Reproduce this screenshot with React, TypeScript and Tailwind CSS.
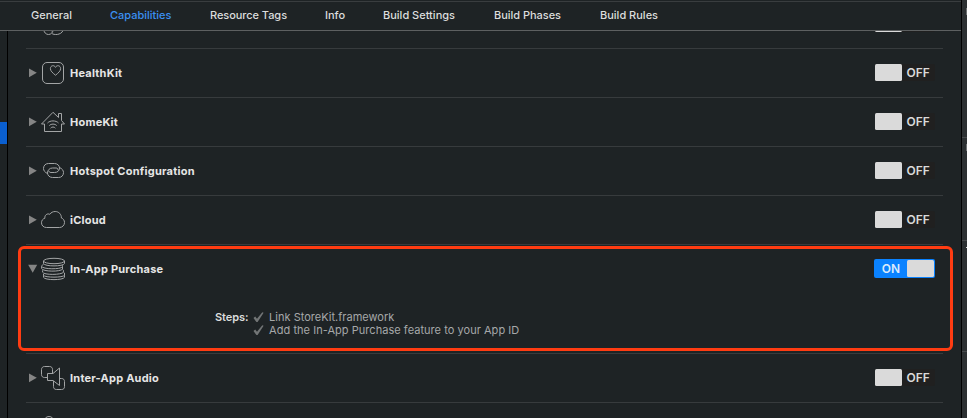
import React from "react";

const tabs = [
  { label: "General", cls: "w-[79px]" },
  { label: "Capabilities", cls: "w-[100px] text-[#3b8ff2]" },
  { label: "Resource Tags", cls: "w-[115px] tracking-[-0.06px]" },
  { label: "Info", cls: "w-[58px]" },
  { label: "Build Settings", cls: "w-[111px]" },
  { label: "Build Phases", cls: "w-[106px] tracking-[-0.03px]" },
  { label: "Build Rules", cls: "w-[80px]" },
];

function Icon({ children }: { children?: React.ReactNode }) {
  return (
    <svg width="26" height="26" viewBox="0 0 26 26" fill="none" stroke="#a3a5a6" strokeWidth="1" strokeLinejoin="round" className="mr-[4px] ml-[2px] shrink-0">
      {children}
    </svg>
  );
}

const GameIcon = (
  <Icon>
    <circle cx="8.5" cy="19" r="4.5" />
    <path d="M6 20C8 17 11 18 12 20.5" />
    <path d="M12 22.5C13.5 24 21 24.5 23 19.5" />
  </Icon>
);

const HealthIcon = (
  <Icon>
    <rect x="2.5" y="2.5" width="21" height="21" rx="4.5" />
    <path d="M15.5 15.2C12.5 12.8 10.4 11 10.4 8.6C10.4 5.4 14.3 4.6 15.5 7.4C16.7 4.6 20.6 5.4 20.6 8.6C20.6 11 18.5 12.8 15.5 15.2Z" />
  </Icon>
);

const HomeIcon = (
  <Icon>
    <path d="M4.5 15V22.5H21.5V15H24.5L21.5 11.5V4.5H18.5V8.5L13 3.3L1.5 15Z" strokeLinejoin="miter" />
    <path d="M7.5 14C10 11.2 16 11.2 18.5 14M9.3 16.6C11 14.6 15 14.6 16.7 16.6M10.6 19.2C11.8 17.6 14.2 17.6 15.4 19.2" />
  </Icon>
);

const HotspotIcon = (
  <Icon>
    <path d="M7.5 15.5C5 14.5 3.5 12.5 3.5 10.5C3.5 7.5 5.5 5.5 8.5 5.5H14.5C17.5 5.5 19.5 7.7 19.5 10C19.5 12.8 17.5 14.5 14.5 14.5H11C9.5 14.5 9 13.8 9 13" />
    <path d="M19.5 9.5C22 10.5 23.5 12.5 23.5 14.5C23.5 17.5 21.5 19.5 18.5 19.5H12.5C9.5 19.5 7.5 17.3 7.5 15C7.5 12.2 9.5 10 12.5 10H16C17.5 10 18 10.7 18 12" />
  </Icon>
);

const CloudIcon = (
  <Icon>
    <path d="M6.5 20.5C3.5 20.5 1.5 18.5 1.5 15.8C1.5 13.5 2.8 11.8 4.9 11.2C4.4 8.2 7.2 6 9.8 7.3C11 5.5 13 4.5 15.2 4.5C18.8 4.5 21.5 7.3 21.4 11C23.2 11.6 24.5 13.3 24.5 15.5C24.5 18.3 22.3 20.5 19.5 20.5Z" />
  </Icon>
);

const CoinsIcon = (
  <Icon>
    <ellipse cx="14" cy="5" rx="10.5" ry="2.7" />
    <path d="M3.5 5V7.5C4.5 10.7 23.5 10.7 24.5 7.5V5" />
    <path d="M3.5 8.5C2.2 9 1.6 9.7 1.6 10.3C2.5 13.4 21 13.6 22.5 10.7V9.3M1.6 10.3V12.5C2.5 15.8 21 16 22.5 13V10.7" />
    <path d="M2.6 14.3V16.2C3.5 19.2 22 19 23.4 16.2V14.2L22.5 13.5M3.5 18V19.2C4.5 21.8 23.5 21.8 24.5 19.2V17L23.4 16.2M3.5 19.2V21.3C4.5 24.4 23.5 24.4 24.5 21.3V19.2" />
  </Icon>
);

const AudioIcon = (
  <Icon>
    <path d="M7.5 12.5H4.5C2.8 12.5 1.5 11.5 1.5 9.5V4.5C1.5 2.8 2.8 1.5 4.5 1.5H9.5C11.5 1.5 12.5 2.8 12.5 4.5V8.5" />
    <path d="M7.5 8.5H13L19.5 3V20.5L13 15.5H7.5Z" strokeLinejoin="miter" />
    <path d="M19.5 13.5H21.5C23.5 13.5 24.5 14.8 24.5 16.5V21.5C24.5 23.5 23.5 24.5 21.5 24.5H16.5C14.5 24.5 13.5 23.5 13.5 21.5V16" />
  </Icon>
);

const KeyIcon = (
  <Icon>
    <circle cx="9" cy="6.5" r="5" />
  </Icon>
);

function Disclosure({ open }: { open?: boolean }) {
  return (
    <svg width="10" height="10" viewBox="0 0 10 10" fill="#858585" className="ml-[2px] shrink-0">
      {open ? <path d="M0.2 0.8H9.2L4.7 8.8Z" /> : <path d="M1 0.4L8.8 4.8L1 9.2Z" />}
    </svg>
  );
}

function Toggle({ on, label = true }: { on?: boolean; label?: boolean }) {
  if (on) {
    return (
      <div className="mr-[8px] flex h-[19px] w-[61px] -translate-y-px items-center justify-end rounded-[2px] bg-[#0a82ff] pr-px">
        <span className="w-[32px] pt-px text-center text-[12px] font-semibold text-[#dcebfb]">ON</span>
        <span className="h-[17px] w-[27px] rounded-[1.5px] bg-[#dadada]" />
      </div>
    );
  }
  return (
    <div className="mr-[8px] flex h-[17px] w-[60px] -translate-y-px items-center rounded-[2px] bg-[#202020]">
      <span className="h-[17px] w-[27px] rounded-[1.5px] bg-[#dadada]" />
      {label && <span className="pt-px pl-[4.5px] text-[12px] font-semibold text-[#dadada]">OFF</span>}
    </div>
  );
}

function Row({ icon, name, nameClass = "", on, children }: { icon: React.ReactNode; name: string; nameClass?: string; on?: boolean; children?: React.ReactNode }) {
  return (
    <section className="shrink-0 border-b border-[#373b3d]">
      <div className="flex h-12 items-center">
        <Disclosure open={on} />
        {icon}
        <h3 className={`grow text-[11px] leading-4 font-bold text-[#e6e6e6] ${nameClass}`}>{name}</h3>
        <Toggle on={on} />
      </div>
      {children}
    </section>
  );
}

function Step({ text, cls }: { text: string; cls: string }) {
  return (
    <li className="flex h-[13px] items-center">
      <svg width="11" height="11" viewBox="0 0 11 11" className="mr-[5px] -ml-[1.5px]" fill="#727576">
        <path d="M0.5 6L2.2 4.6L4 6.8L9.3 0.2L10.6 0.7L4.6 10H3.4Z" />
      </svg>
      <span className={`text-[11px] text-[#a6a8a9] ${cls}`}>{text}</span>
    </li>
  );
}

export default function App() {
  return (
    <div className="flex h-[418px] w-[967px] overflow-hidden bg-[#1e2325] font-['Inter',sans-serif] whitespace-nowrap">
      <div className="relative flex w-[961px] shrink-0 flex-col">
        <nav className="flex h-[31px] shrink-0 items-center border-b border-[#5d6061] pl-[31px] text-[11px] font-medium text-[#dcdddd] shadow-[inset_0_1px_0_#1e2325,inset_0_2px_0_#393d3f]">
          {tabs.map((t) => (
            <a key={t.label} className={t.cls}>{t.label}</a>
          ))}
        </nav>
        <div className="flex h-[387px]">
          <aside className="w-[8px] shrink-0 border-r border-black pt-[91px]">
            <div className="h-[22px] bg-[#0a5fd0]" />
          </aside>
          <main className="flex h-[387px] grow flex-col overflow-hidden pr-[18px] pl-[18px]">
            <div className="-mt-[31px] flex flex-col">
              <div className="flex h-[49px] items-center border-b border-[#373b3d] pl-[12px]">
                {GameIcon}
                <div className="grow" />
                <Toggle label={false} />
              </div>
              <Row icon={HealthIcon} name="HealthKit" nameClass="tracking-[0.23px]" />
              <Row icon={HomeIcon} name="HomeKit" nameClass="tracking-[0.21px]" />
              <Row icon={HotspotIcon} name="Hotspot Configuration" nameClass="tracking-[0.24px]" />
              <Row icon={CloudIcon} name="iCloud" nameClass="tracking-[0.2px]" />
              <Row icon={CoinsIcon} name="In-App Purchase" nameClass="tracking-[0.22px]" on>
                <div className="flex h-[60px] pt-[18px] pl-[189px]">
                  <span className="mr-[6px] h-[13px] text-[11px] leading-[13px] font-semibold tracking-[-0.05px] text-[#dcdddd]">Steps:</span>
                  <ul>
                    <Step text="Link StoreKit.framework" cls="tracking-[0.01px]" />
                    <Step text="Add the In-App Purchase feature to your App ID" cls="tracking-[0.04px]" />
                  </ul>
                </div>
              </Row>
              <Row icon={AudioIcon} name="Inter-App Audio" nameClass="tracking-[0.22px]" />
              <div className="flex h-[49px] items-center pl-[12px]">{KeyIcon}</div>
            </div>
          </main>
        </div>
        <div className="absolute top-[246px] left-[18px] h-[105px] w-[935px] rounded-[6px] border-3 border-[#ff3c12]" />
      </div>
      <aside className="flex w-[6px] shrink-0 flex-col border-l border-black bg-[#2c3032]">
        <div className="flex h-[138px] flex-col items-end border-b border-[#46494b] pt-[8px]">
          <div className="h-[7px] w-px bg-[#6d7071]" />
        </div>
        <div className="flex h-[103px] flex-col items-end border-b border-[#46494b] pt-[6px]">
          <div className="h-[7px] w-px bg-[#6d7071]" />
        </div>
        <div className="flex h-[111px] flex-col items-end border-b border-[#46494b] pt-[6px]">
          <div className="h-px w-px bg-[#dcdddd]" />
        </div>
      </aside>
    </div>
  );
}
